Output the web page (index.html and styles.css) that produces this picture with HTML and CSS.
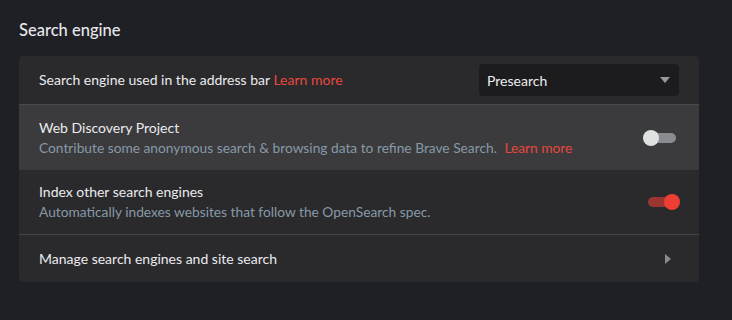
FILE: index.html
```html
<!DOCTYPE html>
<html lang="en">
<head>
  <meta charset="UTF-8" />
  <title>Search engine settings</title>
  <link rel="stylesheet" href="styles.css">
</head>
<body>
  <section class="section">
    <h2 class="section-title">Search engine</h2>
    <div class="card">
      <div class="row row-select">
        <div class="label">Search engine used in the address bar <a class="link" href="#">Learn more</a></div>
        <div class="select">
          <span>Presearch</span>
          <svg class="caret" width="10" height="6" viewBox="0 0 10 6"><path d="M0 0h10L5 6z" fill="#9a9a9d"/></svg>
        </div>
      </div>
      <div class="row row-hover">
        <div class="text">
          <div class="label">Web Discovery Project</div>
          <div class="desc">Contribute some anonymous search &amp; browsing data to refine Brave Search. <a class="link spaced" href="#">Learn more</a></div>
        </div>
        <div class="toggle"><span class="knob"></span></div>
      </div>
      <div class="row">
        <div class="text">
          <div class="label">Index other search engines</div>
          <div class="desc">Automatically indexes websites that follow the OpenSearch spec.</div>
        </div>
        <div class="toggle on"><span class="knob"></span></div>
      </div>
      <div class="row row-link">
        <div class="label">Manage search engines and site search</div>
        <svg class="chevron" width="6" height="10" viewBox="0 0 6 10"><path d="M0 0l6 5-6 5z" fill="#8a8a8e"/></svg>
      </div>
    </div>
  </section>
</body>
</html>
```

FILE: styles.css
```css
body { margin: 0; background: #1f2025; font-family: "Lato", "Noto Sans", sans-serif; color: #e6e6e8; }
.section { padding: 20px 33px 0 19px; }
.section-title { margin: 0 0 16px; font-size: 16.5px; font-weight: 500; color: #e8e8ea; line-height: 20px; }
.card { background: #2a2a2d; border-radius: 4px; overflow: hidden; }
.row { display: flex; align-items: center; justify-content: space-between; padding: 0 22px 0 20px; border-top: 1px solid #444448; }
.row:first-child { border-top: none; }
.row-select { height: 48px; padding-right: 20px; }
.row-hover { height: 65px; background: #3b3b3e; border-top-color: #4a4a4e; }
.row-hover + .row { border-top: none; height: 64px; }
.row-link { height: 47px; padding-right: 28px; }
.label { font-size: 14px; line-height: 18px; color: #ebebed; }
.desc { font-size: 13.75px; line-height: 18px; color: #8799a6; margin-top: 2px; }
.link { color: #e8473c; text-decoration: none; }
.link.spaced { margin-left: 4px; }
.select { width: 200px; height: 32px; box-sizing: border-box; background: #1c1c1f; border-radius: 4px; display: flex; align-items: center; justify-content: space-between; padding: 0 9px 0 8px; font-size: 14px; color: #ececee; }
.toggle { position: relative; width: 28px; height: 10px; border-radius: 5px; background: #8a8b90; margin-right: 1px; }
.toggle .knob { position: absolute; left: -5px; top: -3px; width: 16px; height: 16px; border-radius: 50%; background: #dde2df; }
.toggle.on { background: #9a3530; }
.toggle.on .knob { left: auto; right: -4px; background: #ee3d33; }
```
